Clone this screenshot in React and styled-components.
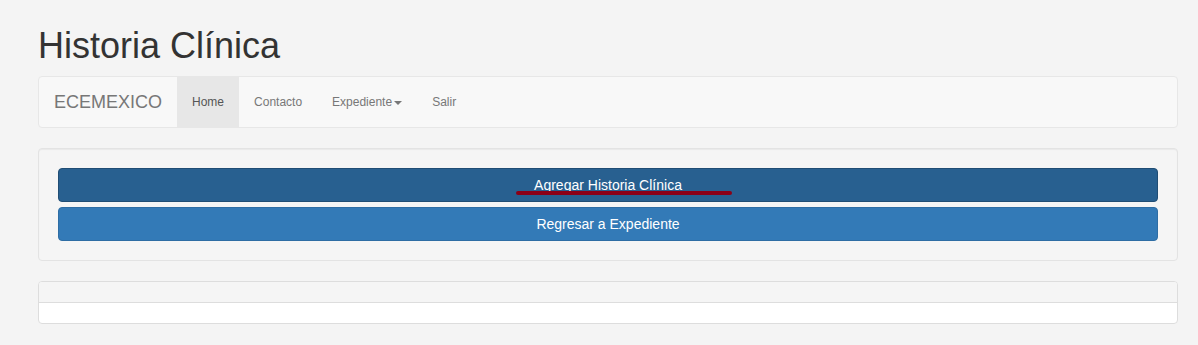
import React from "react";
import styled, { createGlobalStyle } from "styled-components";

const Global = createGlobalStyle`
  html, body { margin: 0; padding: 0; background: #f4f4f4; }
  body { font-family: "Liberation Sans", Arial, sans-serif; font-size: 14px; line-height: 1.42857; color: #333; }
  * { box-sizing: border-box; }
`;

const Page = styled.div`
  width: 1140px;
  margin-left: 38px;
  padding-top: 26px;
`;

const Title = styled.h1`
  margin: 0 0 10px;
  font-size: 36px;
  font-weight: 400;
  line-height: 40px;
  color: #333;
`;

const Navbar = styled.nav`
  display: flex;
  align-items: stretch;
  height: 52px;
  background: #f8f8f8;
  border: 1px solid #e7e7e7;
  border-radius: 4px;
  margin-bottom: 20px;
`;

const Brand = styled.a`
  padding: 15px 15px;
  font-size: 18px;
  line-height: 20px;
  color: #777;
  text-decoration: none;
`;

const NavLink = styled.a`
  display: flex;
  align-items: center;
  padding: 0 15px;
  font-size: 12px;
  line-height: 20px;
  color: ${(p) => (p.$active ? "#555" : "#777")};
  background: ${(p) => (p.$active ? "#e7e7e7" : "transparent")};
  text-decoration: none;
`;

const Caret = styled.span`
  display: inline-block;
  width: 0;
  height: 0;
  margin-left: 2px;
  margin-top: 1px;
  border-top: 4px solid #777;
  border-left: 4px solid transparent;
  border-right: 4px solid transparent;
`;

const Well = styled.div`
  background: #f5f5f5;
  border: 1px solid #e3e3e3;
  border-radius: 4px;
  padding: 19px;
  box-shadow: inset 0 1px 1px rgba(0, 0, 0, 0.05);
  margin-bottom: 20px;
  display: flex;
  flex-direction: column;
  gap: 5px;
`;

const Button = styled.button`
  position: relative;
  display: block;
  width: 100%;
  height: 34px;
  padding: 6px 12px;
  font-family: inherit;
  font-size: 14px;
  line-height: 20px;
  color: #fff;
  background: ${(p) => (p.$focused ? "#286090" : "#337ab7")};
  border: 1px solid ${(p) => (p.$focused ? "#204d74" : "#2e6da4")};
  border-radius: 4px;
  text-align: center;
  cursor: pointer;
`;

const Mark = styled.span`
  position: absolute;
  left: 457px;
  top: 22px;
  width: 216px;
  height: 4px;
  border-radius: 2px;
  background: #8b0017;
`;

const Panel = styled.div`
  background: #fff;
  border: 1px solid #ddd;
  border-radius: 4px;
  overflow: hidden;
`;

const PanelHeading = styled.div`
  height: 21px;
  background: #f5f5f5;
  border-bottom: 1px solid #ddd;
`;

const PanelBody = styled.div`
  height: 20px;
`;

export default function App() {
  return (
    <>
      <Global />
      <Page>
        <Title>Historia Clínica</Title>
        <Navbar>
          <Brand>ECEMEXICO</Brand>
          <NavLink $active>Home</NavLink>
          <NavLink>Contacto</NavLink>
          <NavLink>
            Expediente<Caret />
          </NavLink>
          <NavLink>Salir</NavLink>
        </Navbar>
        <Well>
          <Button $focused>
            Agregar Historia Clínica
            <Mark />
          </Button>
          <Button>Regresar a Expediente</Button>
        </Well>
        <Panel>
          <PanelHeading />
          <PanelBody />
        </Panel>
      </Page>
    </>
  );
}
